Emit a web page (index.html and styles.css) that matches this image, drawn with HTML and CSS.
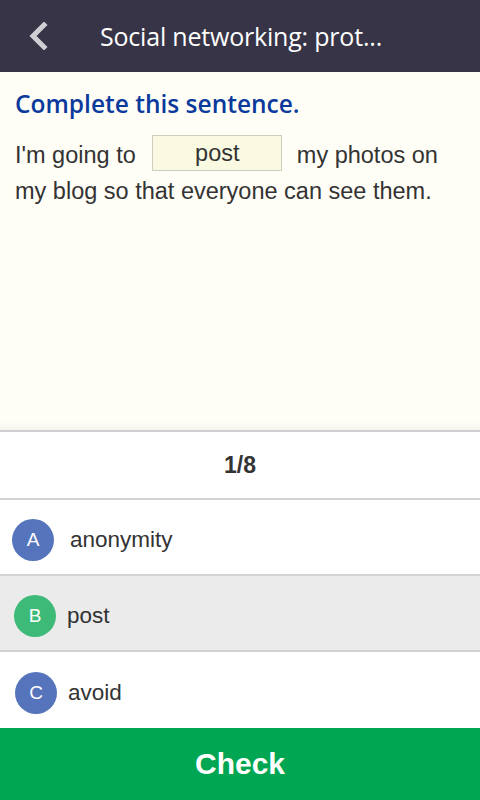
FILE: index.html
```html
<!DOCTYPE html>
<html lang="en">
<head>
  <meta charset="UTF-8">
  <meta name="viewport" content="width=device-width, initial-scale=1.0">
  <title>Social networking: protecting your privacy</title>
  <link rel="stylesheet" href="styles.css">
</head>
<body>
  <header class="topbar">
    <a class="back" href="#">
      <svg width="20" height="28" viewBox="0 0 20 28">
        <path d="M16 3 L5 14 L16 25" fill="none" stroke="#cfcfd3" stroke-width="5" stroke-linecap="square"/>
      </svg>
    </a>
    <h1 class="title">Social networking: prot...</h1>
  </header>

  <main class="question">
    <h2 class="prompt">Complete this sentence.</h2>
    <p class="sentence">I'm going to <span class="blank">post</span> my photos on my blog so that everyone can see them.</p>
  </main>

  <section class="answers">
    <div class="progress">1/8</div>
    <div class="option">
      <span class="letter">A</span>
      <span class="label">anonymity</span>
    </div>
    <div class="option selected">
      <span class="letter">B</span>
      <span class="label">post</span>
    </div>
    <div class="option">
      <span class="letter">C</span>
      <span class="label">avoid</span>
    </div>
  </section>

  <button class="check">Check</button>
</body>
</html>
```

FILE: styles.css
```css
html, body {
  margin: 0;
  padding: 0;
}
body {
  width: 480px;
  height: 800px;
  display: flex;
  flex-direction: column;
  font-family: 'Liberation Sans', Arial, sans-serif;
  color: #333;
  background: #fffef6;
  overflow: hidden;
}
.topbar {
  height: 72px;
  flex: none;
  background: #363446;
  display: flex;
  align-items: center;
}
.back {
  display: flex;
  width: 20px;
  margin-left: 28px;
  margin-right: 52px;
}
.title {
  margin: 0;
  font-family: 'Open Sans', sans-serif;
  font-weight: 400;
  font-size: 25px;
  color: #fff;
  letter-spacing: -0.2px;
}
.question {
  flex: 1;
  padding: 15px 15px 0;
  background: #fffef6;
  box-shadow: inset 0 -8px 8px -6px rgba(0,0,0,0.06);
}
.prompt {
  margin: 0 0 17px;
  font-family: 'Open Sans', sans-serif;
  font-weight: 600;
  font-size: 24.5px;
  color: #0a3a9c;
}
.sentence {
  margin: 0;
  font-size: 23.5px;
  line-height: 36px;
  color: #333;
}
.blank {
  display: inline-block;
  width: 130px;
  height: 36px;
  line-height: 34px;
  margin: -2px 8px 0 10px;
  background: #fafae2;
  border: 1px solid #cfcfc0;
  text-align: center;
  vertical-align: top;
  box-sizing: border-box;
}
.answers {
  flex: none;
  background: #fff;
  border-top: 2px solid #cfcfcf;
}
.progress {
  height: 66px;
  display: flex;
  align-items: center;
  justify-content: center;
  font-size: 23px;
  font-weight: 700;
  color: #333;
  border-bottom: 2px solid #d2d2d2;
}
.option {
  height: 76px;
  box-sizing: border-box;
  padding-top: 5px;
  display: flex;
  align-items: center;
  padding-left: 12px;
  border-bottom: 2px solid #d2d2d2;
  font-size: 22.5px;
}
.option:last-child {
  border-bottom: none;
  padding-left: 15px;
}
.option.selected {
  background: #ebebeb;
  padding-left: 14px;
}
.letter {
  width: 42px;
  height: 42px;
  border-radius: 50%;
  background: #5574bb;
  color: #fff;
  display: flex;
  align-items: center;
  justify-content: center;
  font-size: 19px;
  margin-right: 16px;
}
.selected .letter,
.option:last-child .letter {
  margin-right: 11px;
}
.selected .letter {
  background: #3dba78;
}
.check {
  flex: none;
  height: 72px;
  border: none;
  background: #00a651;
  color: #fff;
  font-family: 'Liberation Sans', Arial, sans-serif;
  font-weight: 700;
  font-size: 30px;
  padding: 0;
}
```
